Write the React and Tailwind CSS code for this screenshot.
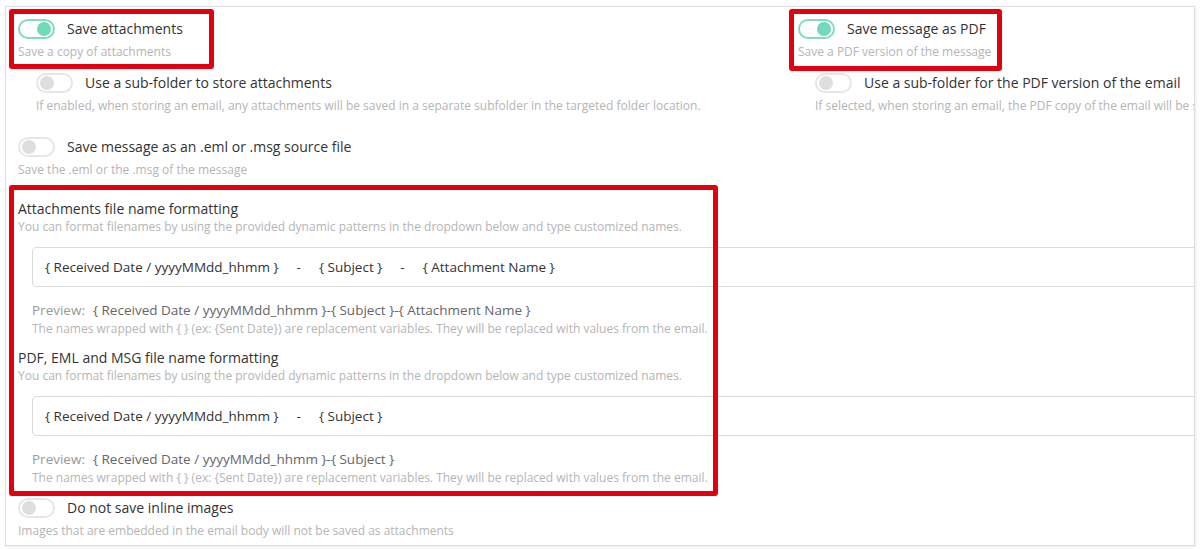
import React from 'react';

const font = { fontFamily: '"Open Sans", "Noto Sans", Arial, sans-serif' };

function Toggle({ on }) {
    return on ? (
        <span className="relative inline-block w-[37px] h-[20px] shrink-0 rounded-full border-2 border-[#7fdcc3] bg-white">
            <span className="absolute right-[2px] top-[1px] w-[14px] h-[14px] rounded-full bg-[#72d9b9]"></span>
        </span>
    ) : (
        <span className="relative inline-block w-[37px] h-[20px] shrink-0 rounded-full border-2 border-[#e6e6e6] bg-white">
            <span className="absolute left-[2px] top-[1px] w-[14px] h-[14px] rounded-full bg-[#dedede]"></span>
        </span>
    );
}

function Option({ on, title, desc, className = '' }) {
    return (
        <div className={className}>
            <div className="flex items-center gap-[12px]">
                <Toggle on={on} />
                <span className="text-[14px] leading-[20px] text-[#333]">{title}</span>
            </div>
            <p className="mt-[4px] text-[12px] leading-[18px] text-[#b5b5b5] whitespace-nowrap">{desc}</p>
        </div>
    );
}

function Highlight({ className }) {
    return <span className={`absolute border-[5px] border-[#e1000f] rounded-[3px] pointer-events-none ${className}`}></span>;
}

function Formatting({ title, parts, className = '' }) {
    return (
        <div className={className}>
            <h4 className="text-[14px] leading-[20px] text-[#333]">{title}</h4>
            <p className="text-[12px] leading-[16px] text-[#b5b5b5] whitespace-nowrap">You can format filenames by using the provided dynamic patterns in the dropdown below and type customized names.</p>
            <div className="mt-[12px] ml-[14px] w-[1300px] h-[40px] border border-[#dcdcdc] rounded-[4px] flex items-center pl-[12px] text-[13.5px] text-[#333]">
                {parts.map((p, i) => (
                    <React.Fragment key={i}>
                        {i > 0 && <span className="px-[18px]">-</span>}
                        <span>{p}</span>
                    </React.Fragment>
                ))}
            </div>
            <p className="mt-[13px] ml-[14px] text-[13.5px] leading-[20px] whitespace-nowrap">
                <span className="text-[#999]">Preview:</span>
                <span className="ml-[8px] text-[#666]">{parts.join('-')}</span>
            </p>
            <p className="ml-[14px] text-[12px] leading-[18px] text-[#b5b5b5] whitespace-nowrap">The names wrapped with {'{ }'} (ex: {'{Sent Date}'}) are replacement variables. They will be replaced with values from the email.</p>
        </div>
    );
}

export default function App() {
    return (
        <div className="bg-white w-[1200px] h-[549px] pt-[6px] px-[5px]" style={font}>
            <div className="relative h-[540px] border border-[#dddddd] shadow-[1px_1px_3px_rgba(0,0,0,0.08)] overflow-hidden pt-[12px] pl-[12px]">
                <div className="flex w-[1600px]">
                    {/* Left column */}
                    <div className="w-[780px] shrink-0">
                        <div className="relative">
                            <Option on title="Save attachments" desc="Save a copy of attachments" />
                            <Highlight className="-left-[9px] -top-[10px] w-[205px] h-[60px]" />
                        </div>
                        <Option
                            title="Use a sub-folder to store attachments"
                            desc="If enabled, when storing an email, any attachments will be saved in a separate subfolder in the targeted folder location."
                            className="mt-[12px] ml-[18px]"
                        />
                        <Option
                            title="Save message as an .eml or .msg source file"
                            desc="Save the .eml or the .msg of the message"
                            className="mt-[22px]"
                        />
                    </div>
                    {/* Right column */}
                    <div className="shrink-0">
                        <div className="relative">
                            <Option on title="Save message as PDF" desc="Save a PDF version of the message" />
                            <Highlight className="-left-[9px] -top-[10px] w-[213px] h-[62px]" />
                        </div>
                        <Option
                            title="Use a sub-folder for the PDF version of the email"
                            desc="If selected, when storing an email, the PDF copy of the email will be saved in a separate subfolder in the targeted folder location."
                            className="mt-[12px] ml-[17px]"
                        />
                    </div>
                </div>

                <div className="relative mt-[20px]">
                    <Formatting
                        title="Attachments file name formatting"
                        parts={['{ Received Date / yyyyMMdd_hhmm }', '{ Subject }', '{ Attachment Name }']}
                    />
                    <Formatting
                        title="PDF, EML and MSG file name formatting"
                        parts={['{ Received Date / yyyyMMdd_hhmm }', '{ Subject }']}
                        className="mt-[10px]"
                    />
                    <Highlight className="-left-[9px] -top-[14px] w-[709px] h-[311px]" />
                </div>

                <Option
                    title="Do not save inline images"
                    desc="Images that are embedded in the email body will not be saved as attachments"
                    className="mt-[11px]"
                />
            </div>
        </div>
    );
}
